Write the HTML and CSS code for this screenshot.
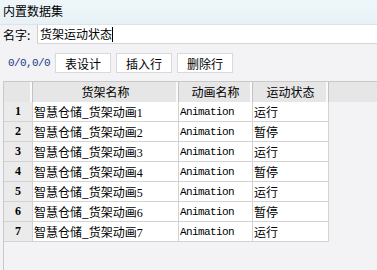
FILE: index.html
```html
<!DOCTYPE html>
<html>
<head>
<meta charset="utf-8">
<link rel="stylesheet" href="styles.css">
</head>
<body>
<div class="title">内置数据集</div>
<div class="name-row">
  <span class="label">名字:</span>
  <div class="input"><span class="value">货架运动状态</span><span class="caret"></span></div>
</div>
<div class="toolbar">
  <span class="pos">0/0,0/0</span>
  <button class="btn">表设计</button>
  <button class="btn">插入行</button>
  <button class="btn">删除行</button>
</div>
<div class="grid">
  <div class="head">
    <div class="hc"></div>
    <div class="hc">货架名称</div>
    <div class="hc">动画名称</div>
    <div class="hc">运动状态</div>
  </div>
  <div class="body">
    <div class="num">1</div><div class="cell">智慧仓储_货架动画<span class="d">1</span></div><div class="cell mono">Animation</div><div class="cell">运行</div>
    <div class="num">2</div><div class="cell">智慧仓储_货架动画<span class="d">2</span></div><div class="cell mono">Animation</div><div class="cell">暂停</div>
    <div class="num">3</div><div class="cell">智慧仓储_货架动画<span class="d">3</span></div><div class="cell mono">Animation</div><div class="cell">运行</div>
    <div class="num">4</div><div class="cell">智慧仓储_货架动画<span class="d">4</span></div><div class="cell mono">Animation</div><div class="cell">暂停</div>
    <div class="num">5</div><div class="cell">智慧仓储_货架动画<span class="d">5</span></div><div class="cell mono">Animation</div><div class="cell">运行</div>
    <div class="num">6</div><div class="cell">智慧仓储_货架动画<span class="d">6</span></div><div class="cell mono">Animation</div><div class="cell">暂停</div>
    <div class="num">7</div><div class="cell">智慧仓储_货架动画<span class="d">7</span></div><div class="cell mono">Animation</div><div class="cell">运行</div>
  </div>
</div>
</body>
</html>
```
FILE: styles.css
```css
html, body {
  margin: 0;
  padding: 0;
  height: 100%;
}
body {
  background: #f3f3f5;
  font-family: "Noto Sans CJK SC", "Noto Sans", sans-serif;
  font-size: 12px;
  color: #000;
  display: flex;
  flex-direction: column;
  overflow: hidden;
}
.title {
  height: 24px;
  line-height: 22px;
  padding-left: 3px;
  background: linear-gradient(#eef6f9, #e8f2f6);
  border-bottom: 1px solid #dbe4e8;
  flex: none;
}
.name-row {
  display: flex;
  height: 19px;
  flex: none;
}
.label {
  width: 34px;
  padding-left: 3px;
  line-height: 19px;
}
.input {
  flex: 1;
  background: #fff;
  border-left: 1px solid #cfcfcf;
  border-bottom: 1px solid #d6d6d6;
  display: flex;
  align-items: center;
  padding-left: 2px;
}
.value {
  line-height: 16px;
}
.caret {
  width: 1px;
  height: 15px;
  background: #000;
}
.toolbar {
  display: flex;
  align-items: center;
  margin-top: 9px;
  height: 20px;
  padding-left: 8px;
  gap: 5px;
  flex: none;
}
.pos {
  font-family: "Liberation Mono", monospace;
  font-size: 11px;
  letter-spacing: -0.6px;
  color: #1b3a8a;
  width: 42px;
}
.btn {
  width: 56px;
  height: 20px;
  margin: 0;
  padding: 0;
  background: #fff;
  border: 1px solid #d9d9d9;
  font-family: inherit;
  font-size: 12px;
  line-height: 17px;
  color: #000;
}
.grid {
  margin-top: 8px;
  margin-left: 3px;
  border-left: 1px solid #c9c9c9;
  border-top: 1px solid #c9c9c9;
  flex: 1;
}
.head, .body {
  display: grid;
  grid-template-columns: 29px 146px 74px 76px;
}
.head {
  background: #e6e6e6;
  height: 20px;
}
.hc {
  border-right: 1px solid #c2c2c2;
  box-shadow: inset -2px 0 0 #fafafa;
  text-align: center;
  line-height: 20px;
}
.num {
  background: #ebebeb;
  border-bottom: 1px solid #d3d3d3;
  border-right: 1px solid #d3d3d3;
  text-align: center;
  height: 19px;
  line-height: 19px;
  font-family: "Liberation Serif", serif;
  font-weight: bold;
  font-size: 12px;
}
.cell {
  background: #fff;
  border-bottom: 1px solid #d3d3d3;
  border-right: 1px solid #d3d3d3;
  height: 19px;
  line-height: 19px;
  padding-left: 1px;
  white-space: nowrap;
  overflow: hidden;
}
.d {
  font-family: "Liberation Serif", serif;
}
.mono {
  font-family: "Liberation Mono", monospace;
  font-size: 11px;
  letter-spacing: -0.6px;
  line-height: 20px;
}
```
